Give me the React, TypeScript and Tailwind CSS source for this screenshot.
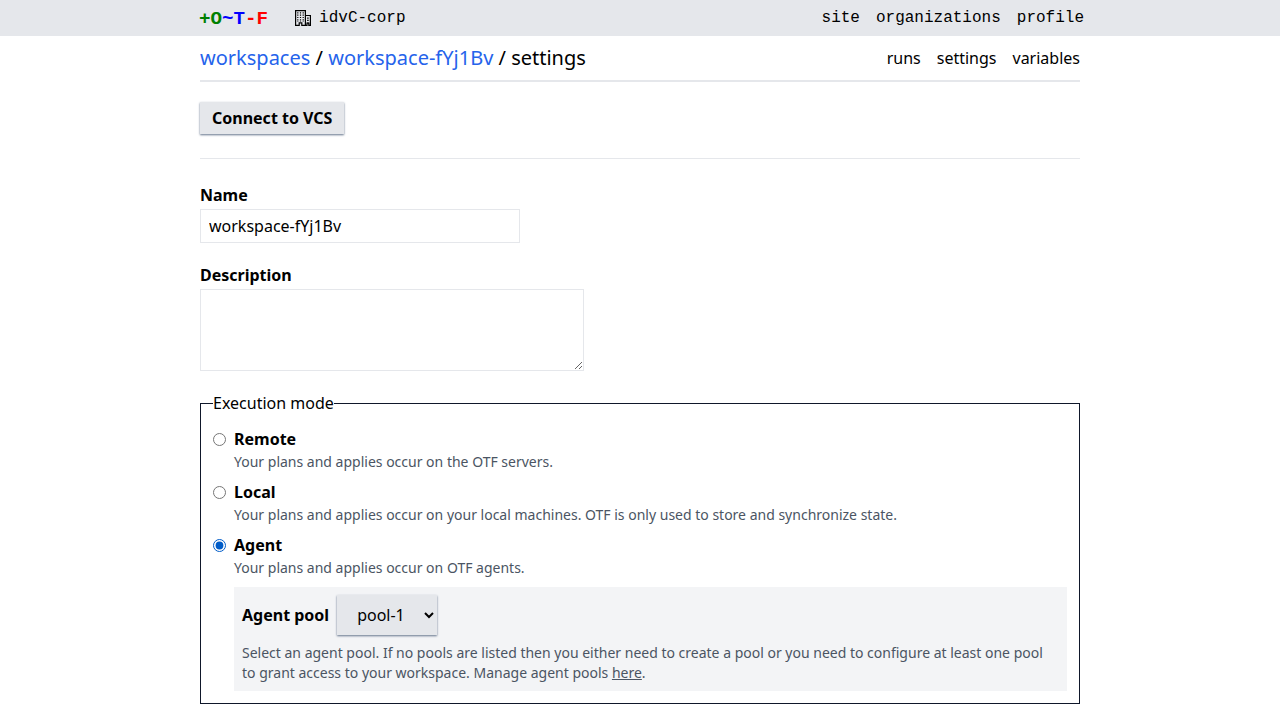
import React from "react";

function Mode({ id, title, text, checked, children }: { id: string; title: string; text: string; checked?: boolean; children?: React.ReactNode }) {
  return (
    <div className="flex gap-2">
      <input type="radio" name="mode" id={id} defaultChecked={checked} className="mt-[6px] h-[13px] w-[13px] shrink-0 accent-[#005cc8]" />
      <div className="flex grow flex-col">
        <label htmlFor={id} className="font-bold leading-6">{title}</label>
        <span className="mt-[1px] text-sm text-[#4b5563]">{text}</span>
        {children}
      </div>
    </div>
  );
}

function OfficeIcon() {
  return (
    <svg className="ml-[27px] h-4 w-4" viewBox="0 0 16 16">
      <path d="M.6 15.4V.6h9.8v14.8M10.4 5.5h5v9.9M0 15.4h4.2v-2.5h2.6v2.5h5.2v-2.2h1.8v2.2H16" fill="none" stroke="currentColor" strokeWidth="1.2" />
      <path d="M2.8 2.3v9.6M5.5 2.3v9.6M8.2 2.3v9.6" fill="none" stroke="currentColor" strokeWidth="1.2" strokeDasharray="1.2 1.1" />
      <path d="M12.9 7.5v5" fill="none" stroke="currentColor" strokeWidth="1.5" strokeDasharray="1.2 1.1" />
    </svg>
  );
}

export default function App() {
  return (
    <div className="h-[720px] overflow-hidden bg-white font-['Noto_Sans',sans-serif] text-base text-black">
      <header className="h-9 bg-[#e5e7eb] font-['Liberation_Mono',monospace]">
        <div className="mx-auto flex h-9 w-[880px] items-center">
          <a className="-ml-px pt-0.5 text-[19.2px] font-bold">
            <span className="text-[green]">+O</span><span className="text-[blue]">~T</span><span className="text-[red]">-F</span>
          </a>
          <OfficeIcon />
          <span className="ml-2">idvC-corp</span>
          <nav className="-mr-1 ml-auto flex gap-4"><a>site</a><a>organizations</a><a>profile</a></nav>
        </div>
      </header>
      <main className="mx-auto w-[880px]">
        <div className="flex h-[46px] items-center justify-between border-b-2 border-[#e5e7eb]">
          <div className="text-xl"><a className="text-[#2563eb]">workspaces</a> / <a className="text-[#2563eb]">workspace-fYj1Bv</a> / settings</div>
          <nav className="flex gap-4"><a>runs</a><a>settings</a><a>variables</a></nav>
        </div>
        <button className="mt-5 block h-8 w-36 bg-[#e5e7eb] pl-3 text-left font-bold whitespace-nowrap shadow-[0_1px_2px_#64748b]">Connect to VCS</button>
        <hr className="mt-6 border-[#e5e7eb]" />
        <div className="mt-6 flex flex-col">
          <label className="font-bold" htmlFor="name">Name</label>
          <input id="name" className="mt-0.5 h-[34px] w-80 border border-[#e5e7eb] px-2" defaultValue="workspace-fYj1Bv" />
        </div>
        <div className="mt-5 flex flex-col">
          <label className="font-bold" htmlFor="desc">Description</label>
          <textarea id="desc" className="mt-0.5 h-[82px] w-96 border border-[#e5e7eb]" />
        </div>
        <fieldset className="mt-5 flex flex-col gap-2 border border-[#0f172a] px-3 pb-3 pt-3">
          <legend>Execution mode</legend>
          <Mode id="remote" title="Remote" text="Your plans and applies occur on the OTF servers." />
          <Mode id="local" title="Local" text="Your plans and applies occur on your local machines. OTF is only used to store and synchronize state." />
          <Mode id="agent" title="Agent" text="Your plans and applies occur on OTF agents." checked>
            <div className="mt-[9px] bg-[#f3f4f6] p-2">
              <div className="flex items-center gap-2">
                <label className="font-bold" htmlFor="pool">Agent pool</label>
                <select id="pool" className="h-10 w-[100px] bg-[#e5e7eb] px-4 shadow-[0_1px_2px_#64748b]"><option>pool-1</option></select>
              </div>
              <p className="mt-2 text-sm text-[#4b5563]">Select an agent pool. If no pools are listed then you either need to create a pool or you need to configure at least one pool to grant access to your workspace. Manage agent pools <a className="underline">here</a>.</p>
            </div>
          </Mode>
        </fieldset>
      </main>
    </div>
  );
}
